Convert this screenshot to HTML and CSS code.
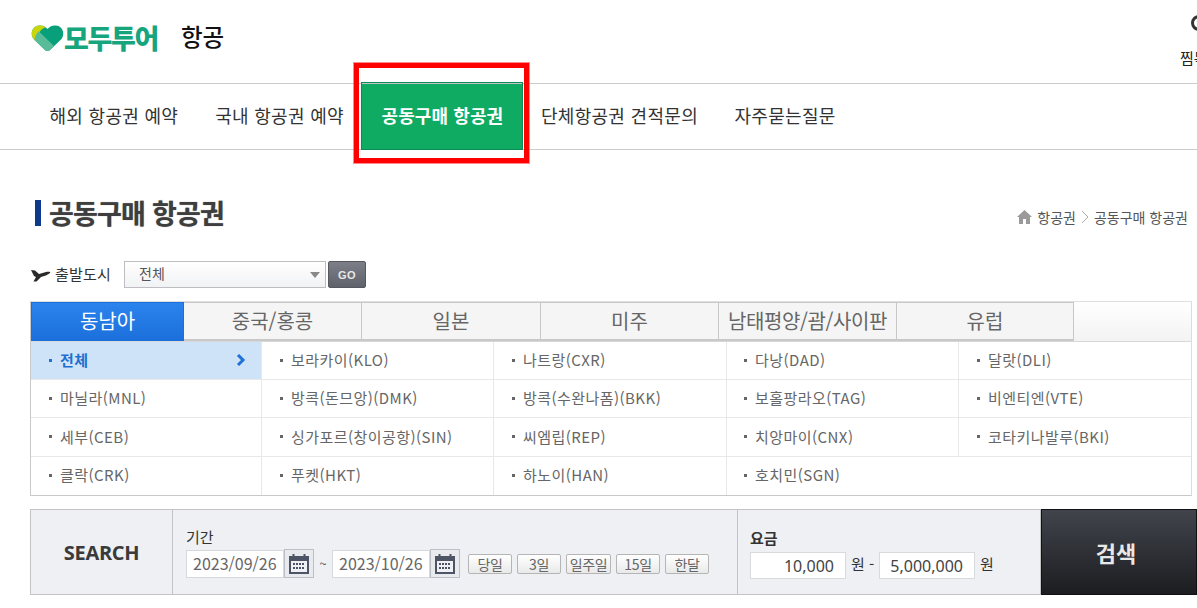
FILE: index.html
```html
<!DOCTYPE html>
<html lang="ko">
<head>
<meta charset="utf-8">
<title>공동구매 항공권</title>
<link rel="stylesheet" href="styles.css">
</head>
<body>
<div class="page">
  <header class="top">
    <svg class="heart" width="33" height="26" viewBox="0 0 33 26">
      <path d="M16.500 26 C15 26 14 25 13 24 L3 14.500 C-1 10.500 0 1 8.500 0.500 C12 0.300 15 2 16.500 4 C18 2 21 0.300 24.500 0.500 C33 1 34 10.500 30 14.500 L20 24 C19 25 18 26 16.500 26 Z" fill="#08a07a"/>
      <path d="M6 17.300 L3 14.500 C-1 10.500 0 1 8.500 0.500 C11 0.400 13 1.200 14.500 2.300 C9 4.500 6.500 8.500 6 17.300 Z" fill="#c8d60a"/>
      <path d="M3.500 15 C4 11 6 7.500 8 6.500 L23 21 L20 24 C19 25 18 26 16.500 26 C15 26 14 25 13 24 Z" fill="#58bc98"/>
    </svg>
    <span class="brand">모두투어</span>
    <span class="section">항공</span>
    <div class="util">
      <span class="util-ring"></span>
      <span class="util-text">찜목록</span>
    </div>
  </header>

  <nav class="gnb">
    <a class="gnb-item">해외 항공권 예약</a>
    <a class="gnb-item">국내 항공권 예약</a>
    <a class="gnb-item gnb-on">공동구매 항공권<span class="redbox"></span></a>
    <a class="gnb-item">단체항공권 견적문의</a>
    <a class="gnb-item">자주묻는질문</a>
  </nav>

  <div class="titlebar">
    <h1 class="title">공동구매 항공권</h1>
    <div class="crumbs">
      <svg width="15" height="14" viewBox="0 0 15 14"><path d="M7.500 0 L15 7 L13 7 L13 14 L9 14 L9 9 L6 9 L6 14 L2 14 L2 7 L0 7 Z" fill="#9a9a9a"/></svg>
      <span>항공권</span>
      <svg width="8" height="14" viewBox="0 0 8 14"><path d="M1 1 L7 7 L1 13" fill="none" stroke="#aaa" stroke-width="1"/></svg>
      <span>공동구매 항공권</span>
    </div>
  </div>

  <div class="depart">
    <svg width="20" height="14" viewBox="0 0 20 14"><path d="M0 2 L4 2.500 L8 6 L15 4 C18 3.300 20 3.800 19 5 C17 7 13 8 10 9 L5.500 13.500 L2.500 13.500 L5 9 L3 8 Z" fill="#2a2a2a"/></svg>
    <span class="depart-label">출발도시</span>
    <div class="select"><span>전체</span><i class="caret"></i></div>
    <button class="go">GO</button>
  </div>

  <section class="region">
    <div class="tabs">
      <div class="tab tab-on">동남아</div>
      <div class="tab t2">중국/홍콩</div>
      <div class="tab t3">일본</div>
      <div class="tab t4">미주</div>
      <div class="tab t5">남태평양/괌/사이판</div>
      <div class="tab t6">유럽</div>
    </div>
    <div class="cities">
      <div class="city city-on"><span>전체</span><svg width="10" height="12" viewBox="0 0 10 12"><path d="M2 1 L7 6 L2 11" fill="none" stroke="#1f73d8" stroke-width="3"/></svg></div>
      <div class="city c2"><span>보라카이(KLO)</span></div>
      <div class="city c3"><span>나트랑(CXR)</span></div>
      <div class="city c4"><span>다낭(DAD)</span></div>
      <div class="city c5"><span>달랏(DLI)</span></div>
      <div class="city"><span>마닐라(MNL)</span></div>
      <div class="city c2"><span>방콕(돈므앙)(DMK)</span></div>
      <div class="city c3"><span>방콕(수완나폼)(BKK)</span></div>
      <div class="city c4"><span>보홀팡라오(TAG)</span></div>
      <div class="city c5"><span>비엔티엔(VTE)</span></div>
      <div class="city"><span>세부(CEB)</span></div>
      <div class="city c2"><span>싱가포르(창이공항)(SIN)</span></div>
      <div class="city c3"><span>씨엠립(REP)</span></div>
      <div class="city c4"><span>치앙마이(CNX)</span></div>
      <div class="city c5"><span>코타키나발루(BKI)</span></div>
      <div class="city last"><span>클락(CRK)</span></div>
      <div class="city c2 last"><span>푸켓(HKT)</span></div>
      <div class="city c3 last"><span>하노이(HAN)</span></div>
      <div class="city c4 last"><span>호치민(SGN)</span></div>
      <div class="city c5 last empty"></div>
    </div>
  </section>

  <section class="search">
    <div class="s-head">SEARCH</div>
    <div class="s-period">
      <div class="s-label">기간</div>
      <div class="s-row">
        <span class="date">2023/09/26</span>
        <span class="cal"><svg width="20" height="20" viewBox="0 0 20 20"><rect x="0" y="2" width="20" height="18" fill="#4c5466"/><rect x="2" y="7" width="16" height="11" fill="#eef0f4"/><rect x="3.500" y="0" width="2" height="4" fill="#4c5466"/><rect x="14.500" y="0" width="2" height="4" fill="#4c5466"/><g fill="#4c5466"><rect x="4" y="9" width="2" height="2"/><rect x="7" y="9" width="2" height="2"/><rect x="10" y="9" width="2" height="2"/><rect x="13" y="9" width="2" height="2"/><rect x="4" y="13" width="2" height="2"/><rect x="7" y="13" width="2" height="2"/><rect x="10" y="13" width="2" height="2"/><rect x="13" y="13" width="2" height="2"/></g></svg></span>
        <span class="tilde">~</span>
        <span class="date">2023/10/26</span>
        <span class="cal"><svg width="20" height="20" viewBox="0 0 20 20"><rect x="0" y="2" width="20" height="18" fill="#4c5466"/><rect x="2" y="7" width="16" height="11" fill="#eef0f4"/><rect x="3.500" y="0" width="2" height="4" fill="#4c5466"/><rect x="14.500" y="0" width="2" height="4" fill="#4c5466"/><g fill="#4c5466"><rect x="4" y="9" width="2" height="2"/><rect x="7" y="9" width="2" height="2"/><rect x="10" y="9" width="2" height="2"/><rect x="13" y="9" width="2" height="2"/><rect x="4" y="13" width="2" height="2"/><rect x="7" y="13" width="2" height="2"/><rect x="10" y="13" width="2" height="2"/><rect x="13" y="13" width="2" height="2"/></g></svg></span>
        <span class="quick">
          <button class="qbtn">당일</button>
          <button class="qbtn">3일</button>
          <button class="qbtn">일주일</button>
          <button class="qbtn">15일</button>
          <button class="qbtn">한달</button>
        </span>
      </div>
    </div>
    <div class="s-fare">
      <div class="s-label strong">요금</div>
      <div class="s-row">
        <span class="amount">10,000</span>
        <span class="won">원 -</span>
        <span class="amount">5,000,000</span>
        <span class="won">원</span>
      </div>
    </div>
    <button class="s-btn">검색</button>
  </section>
</div>
</body>
</html>
```
FILE: styles.css
```css
* { box-sizing: border-box; }
html, body { margin: 0; padding: 0; background: #fff; overflow: hidden; }
body { font-family: "Noto Sans CJK KR", "Noto Sans", sans-serif; color: #333; }
.page { width: 1197px; height: 608px; overflow: hidden; }

.top { height: 84px; border-bottom: 1px solid #ccc; display: flex; align-items: flex-start; padding-left: 31px; }
.heart { margin-top: 25px; flex: none; }
.brand { margin-top: 19px; font-size: 27px; line-height: 38px; font-weight: 900; color: #16a57d; letter-spacing: -1.300px; white-space: nowrap; width: 117px; }
.section { margin-top: 19px; font-size: 23.500px; line-height: 34px; font-weight: 500; color: #111; }
.util { margin-left: auto; width: 17px; height: 83px; overflow: hidden; display: flex; flex-direction: column; align-items: flex-start; flex: none; }
.util-ring { margin-top: 15px; margin-left: 11px; width: 16px; height: 16px; border: 3px solid #333; border-radius: 50%; flex: none; }
.util-text { margin-top: 17px; font-size: 15px; line-height: 20px; white-space: nowrap; color: #222; }

.gnb { height: 66px; border-bottom: 1px solid #ccc; display: flex; padding-left: 31px; }
.gnb-item { display: flex; align-items: center; padding: 0 18.500px 3px; font-size: 18px; line-height: 24px; color: #333; white-space: nowrap; height: 65px; letter-spacing: 0.300px; }
.gnb-on { position: relative; margin: -2px 0 0 -1px; width: 162px; height: 68px; padding: 0 0 2px; justify-content: center; background: #0fab62; border: 1px solid #0c8a58; box-shadow: inset 0 1px #c5c5c5; color: #fff; font-weight: 700; letter-spacing: 0.100px; }
.gnb-on + .gnb-item { padding-left: 17.500px; padding-right: 18px; }
.redbox { position: absolute; left: -8px; top: -20px; width: 175px; height: 100px; border: 5px solid #f00; outline: 1px solid rgba(255, 0, 0, 0.450); pointer-events: none; }

.titlebar { display: flex; justify-content: space-between; align-items: center; padding: 0 9px 0 35px; margin-top: 46px; height: 34px; }
.title { margin: 0; padding-left: 14px; font-size: 27px; line-height: 30px; font-weight: 700; color: #3e3e3e; letter-spacing: -0.800px; position: relative; text-shadow: 0 0 1px #888; }
.title::before { content: ""; position: absolute; left: 0; top: 2px; width: 6px; height: 26px; background: #0e3a8c; }
.crumbs { display: flex; align-items: center; gap: 5px; font-size: 14px; line-height: 18px; color: #555; margin-top: 8px; }

.depart { display: flex; align-items: center; height: 27px; margin-top: 31px; padding-left: 31px; }
.depart-label { margin-left: 4px; width: 69px; padding-bottom: 2px; font-size: 15px; letter-spacing: 0.200px; color: #333; }
.select { width: 202px; height: 27px; border: 1px solid #bdbdc2; background: linear-gradient(#fff, #f1f2f4); display: flex; align-items: center; justify-content: space-between; padding: 0 5px 3px 14px; font-size: 14px; color: #555; }
.caret { width: 0; height: 0; margin-top: 3px; border-left: 5px solid transparent; border-right: 5px solid transparent; border-top: 6px solid #888; }
.go { margin-left: 2px; width: 38px; height: 27px; padding: 0; border: 1px solid #55585f; border-radius: 2px; background: linear-gradient(#7c7f87, #5f626a); color: #e8e8e8; font: 700 11px "Liberation Sans", sans-serif; letter-spacing: 0.500px; }

.region { margin: 13px 5px 0 30px; border: 1px solid #c9c9c9; border-top-color: #e0e0e0; border-right-color: #dcdcdc; }
.tabs { display: flex; height: 40px; border-bottom: 1px solid #d8d8d8; background: linear-gradient(#fff, #f3f3f3); }
.tab { height: 39px; display: flex; align-items: center; justify-content: center; padding-bottom: 2px; background: #f5f5f5; border: 1px solid #c8c8c8; border-left: 0; border-bottom-width: 2px; font-size: 20px; color: #666; }
.tab-on { width: 153px; background: linear-gradient(#2b83ee, #1c70dc); border: 1px solid #1c70dc; color: #fff; }
.t2 { width: 178px; }
.t3 { width: 179px; }
.t4 { width: 178px; }
.t5 { width: 178px; letter-spacing: -0.400px; }
.t6 { width: 177px; }

.cities { display: grid; grid-template-columns: 230px 232px 233px 232px 233px; grid-template-rows: 38px 38px 39px 38px; }
.city { display: flex; align-items: center; justify-content: space-between; padding: 0 15px 2px 18px; border-bottom: 1px solid #e8e8e8; font-size: 15px; letter-spacing: 0.450px; color: #666; }
.city span { position: relative; padding-left: 11px; }
.city span::before { content: ""; position: absolute; left: 0; top: 50%; width: 3px; height: 3px; margin-top: -1px; background: #666; }
.city.c2, .city.c3, .city.c4, .city.c5 { border-left: 1px solid #e8e8e8; }
.city.c4 { padding-left: 17px; }
.city.last { border-bottom: 0; padding-bottom: 3px; }
.city.empty { border-left: 0; }
.city-on { background: #cfe3f8; color: #1f6fd0; font-weight: 700; }
.city-on span::before { background: #1f73d8; }

.search { display: flex; height: 86px; margin-top: 13px; margin-left: 30px; }
.s-head { width: 143px; background: #eef0f4; border: 1px solid #c4c4c4; display: flex; align-items: center; justify-content: center; font: 700 20px "Open Sans", sans-serif; color: #3a3a3a; letter-spacing: -0.300px; }
.s-period { width: 565px; background: #eef0f4; border: 1px solid #c4c4c4; border-left: 0; padding: 17px 0 0 13px; }
.s-fare { width: 303px; background: #eef0f4; border: 1px solid #c4c4c4; border-left: 0; padding: 18px 0 0 12px; }
.s-label { font-size: 15px; line-height: 20px; color: #333; height: 20px; }
.s-label.strong { font-weight: 700; }
.s-row { display: flex; align-items: center; }
.s-period .s-row { margin-top: 2px; height: 29px; }
.s-fare .s-row { margin-top: 4px; height: 27px; }
.date { width: 98px; height: 28px; background: #fff; border: 1px solid #d6d8dd; padding-left: 6px; font-size: 16px; line-height: 24px; color: #666; white-space: nowrap; }
.cal { width: 30px; height: 29px; border: 1px solid #bcbfc6; background: #e8eaee; display: flex; align-items: center; justify-content: center; }
.tilde { width: 18px; text-align: center; font-size: 13px; color: #555; }
.quick { display: flex; gap: 5px; margin-left: 8px; }
.qbtn { width: 44px; height: 20px; padding: 0; border: 1px solid #b5b5b5; border-radius: 2px; background: linear-gradient(#fff, #e9e9e9); font: 14px "Noto Sans CJK KR", sans-serif; line-height: 18px; color: #666; letter-spacing: -0.300px; }
.qbtn:nth-child(3) { width: 45px; }
.amount { width: 96px; height: 27px; background: #fff; border: 1px solid #d8dade; padding-right: 11px; text-align: right; font: 16px/26px "Noto Sans", sans-serif; color: #444; white-space: nowrap; }
.won { width: 33px; padding: 0 0 4px 5px; font-size: 15px; color: #333; white-space: nowrap; }
.s-btn { width: 156px; height: 86px; padding: 0 6px 0 0; border: 1px solid #111; background: linear-gradient(#41444c, #1c1d20); color: #e8e8e8; font: 700 22px "Noto Sans CJK KR", sans-serif; flex: none; }
```
